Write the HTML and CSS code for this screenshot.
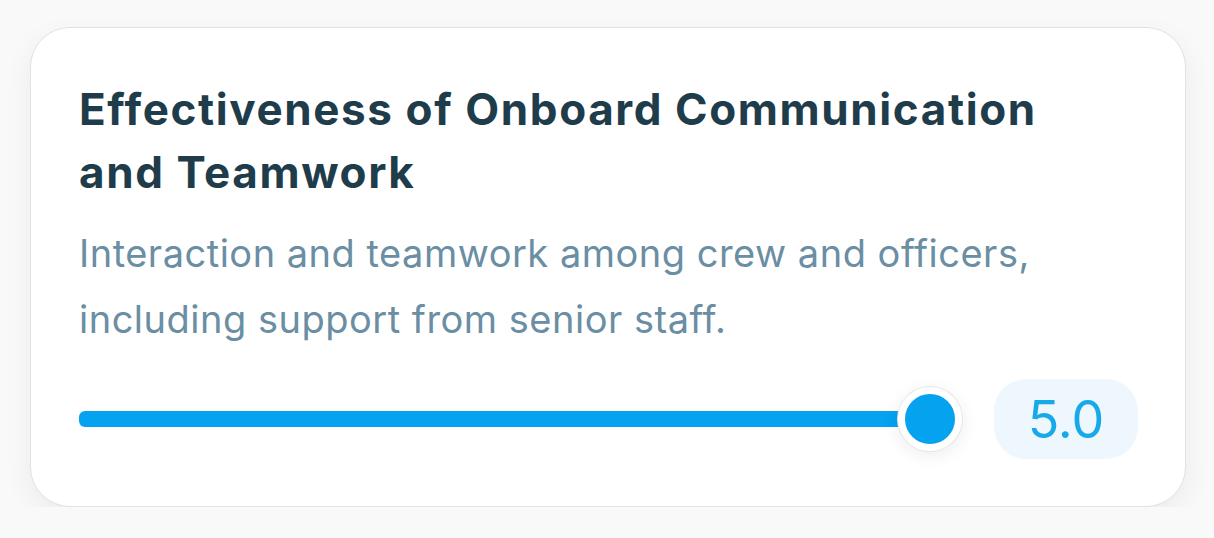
FILE: index.html
```html
<!DOCTYPE html>
<html lang="en">
<head>
<meta charset="utf-8">
<title>Rating</title>
<link rel="stylesheet" href="styles.css">
</head>
<body>
  <div class="card">
    <h2 class="title">Effectiveness of Onboard Communication and Teamwork</h2>
    <p class="desc">Interaction and teamwork among crew and officers, including support from senior staff.</p>
    <div class="row">
      <div class="slider">
        <div class="track"></div>
        <div class="thumb"></div>
      </div>
      <div class="value">5.0</div>
    </div>
  </div>
</body>
</html>
```
FILE: styles.css
```css
html, body {
  margin: 0;
  padding: 0;
  background: #f9f9f9;
}
body {
  padding: 27px 28px 0 30px;
  font-family: Inter, "Noto Sans", sans-serif;
}
.card {
  background: #ffffff;
  border: 1px solid #e2e2e2;
  border-radius: 40px;
  box-shadow: 0 10px 30px rgba(0, 0, 0, 0.06);
  padding: 50px 47px 47px 48px;
}
.title {
  margin: 0;
  max-width: 1000px;
  font-size: 44px;
  line-height: 63px;
  font-weight: 700;
  color: #1f3c4b;
  letter-spacing: 1.6px;
}
.desc {
  margin: 16px 0 0 0;
  font-size: 38px;
  line-height: 66px;
  font-weight: 400;
  color: #6a8ea3;
  letter-spacing: 0.5px;
}
.row {
  margin-top: 27px;
  display: flex;
  align-items: center;
  gap: 32px;
}
.slider {
  flex: 1;
  position: relative;
  height: 64px;
  display: flex;
  align-items: center;
}
.track {
  height: 16px;
  width: calc(100% - 32px);
  background: #05a2f0;
  border-radius: 6px;
}
.thumb {
  position: absolute;
  right: 0;
  top: 0;
  width: 50px;
  height: 50px;
  border-radius: 50%;
  background: #05a2f0;
  border: 7px solid #ffffff;
  box-shadow: 0 0 0 1px #e6e6e6, 0 4px 18px rgba(0, 0, 0, 0.08);
}
.value {
  width: 144px;
  height: 80px;
  border-radius: 32px;
  background: #eef7fd;
  color: #18a9e8;
  font-size: 52px;
  font-weight: 400;
  display: flex;
  align-items: center;
  justify-content: center;
}
```
